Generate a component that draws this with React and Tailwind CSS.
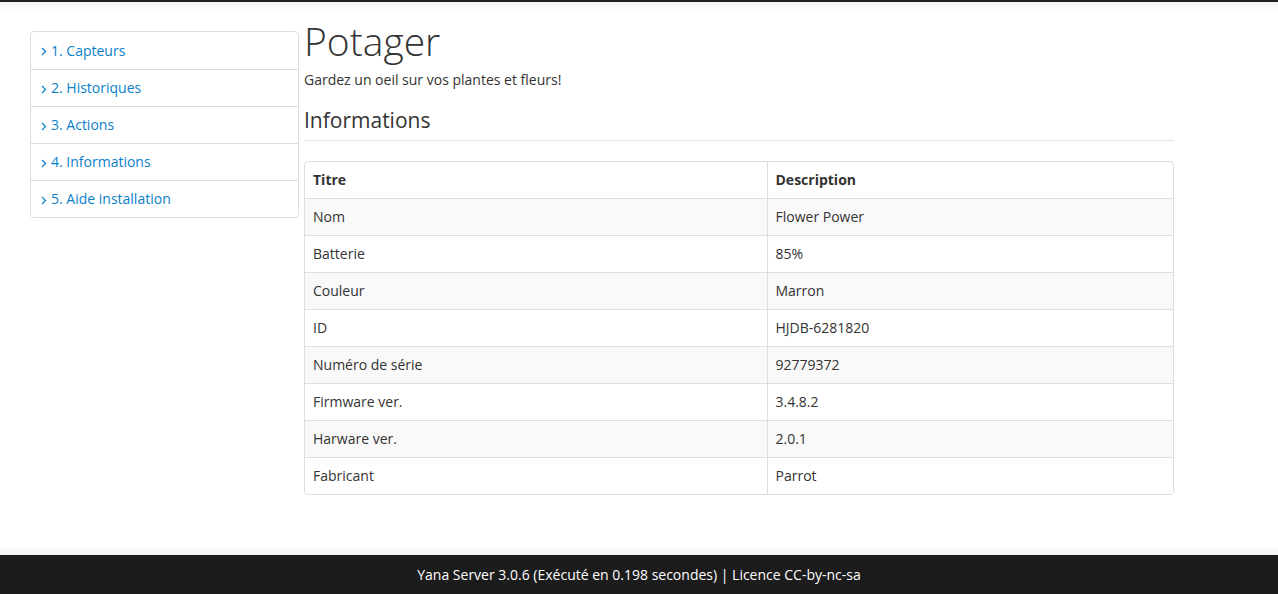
import React from 'react'

const menu = [
  '1. Capteurs',
  '2. Historiques',
  '3. Actions',
  '4. Informations',
  '5. Aide installation',
]

const rows = [
  ['Nom', 'Flower Power'],
  ['Batterie', '85%'],
  ['Couleur', 'Marron'],
  ['ID', 'HJDB-6281820'],
  ['Numéro de série', '92779372'],
  ['Firmware ver.', '3.4.8.2'],
  ['Harware ver.', '2.0.1'],
  ['Fabricant', 'Parrot'],
]

const Chevron = () => (
  <svg width="6" height="9" viewBox="0 0 6 9" className="mr-[4px] mt-[2px]" fill="none">
    <path d="M1 1l3.5 3.5L1 8" stroke="currentColor" strokeWidth="1.2" />
  </svg>
)

const App = () => {
  return (
    <div
      className="h-screen flex flex-col bg-white text-[#333] text-[14px] leading-[20px]"
      style={{ fontFamily: '"Open Sans", "Noto Sans", sans-serif' }}
    >
      <div className="h-[2px] bg-[#222]" />
      <div className="h-[10px] bg-gradient-to-b from-[#f2f2f2] to-white -mb-[10px]" />

      <div className="flex-1 flex items-start pl-[30px] pt-[17px]">
        {/* menu */}
        <div className="w-[269px] mt-[12px] border border-[#ddd] rounded-[4px] bg-white">
          {menu.map((item, i) => (
            <div
              key={item}
              className={`h-[37px] flex items-center pl-[10px] text-[#0a7fc9] ${i > 0 ? 'border-t border-[#ddd]' : ''}`}
            >
              <Chevron />
              {item}
            </div>
          ))}
        </div>

        {/* content */}
        <div className="w-[870px] ml-[5px]">
          <h1 className="text-[39px] leading-[44px] font-light text-[#333]">Potager</h1>
          <p className="mt-[7px]">Gardez un oeil sur vos plantes et fleurs!</p>
          <h3 className="text-[21px] leading-[26px] mt-[17px] pb-[7px] border-b border-[#e5e5e5]">
            Informations
          </h3>

          <div className="mt-[20px] border border-[#ddd] rounded-[4px] overflow-hidden">
            <table className="w-full border-collapse">
              <thead>
                <tr>
                  <th className="w-[462px] text-left font-bold px-[8px] h-[36px] border-r border-[#ddd]">Titre</th>
                  <th className="text-left font-bold px-[8px] h-[36px]">Description</th>
                </tr>
              </thead>
              <tbody>
                {rows.map(([k, v], i) => (
                  <tr key={k} className={i % 2 === 0 ? 'bg-[#f9f9f9]' : 'bg-white'}>
                    <td className="px-[8px] h-[37px] border-t border-r border-[#ddd]">{k}</td>
                    <td className="px-[8px] h-[37px] border-t border-[#ddd]">{v}</td>
                  </tr>
                ))}
              </tbody>
            </table>
          </div>
        </div>
      </div>

      <div className="h-[10px] bg-gradient-to-b from-white to-[#f2f2f2]" />
      <footer className="h-[39px] bg-[#1c1c1c] text-white flex items-center justify-center">
        Yana Server 3.0.6 (Exécuté en 0.198 secondes) | Licence CC-by-nc-sa
      </footer>
    </div>
  )
}

export default App
